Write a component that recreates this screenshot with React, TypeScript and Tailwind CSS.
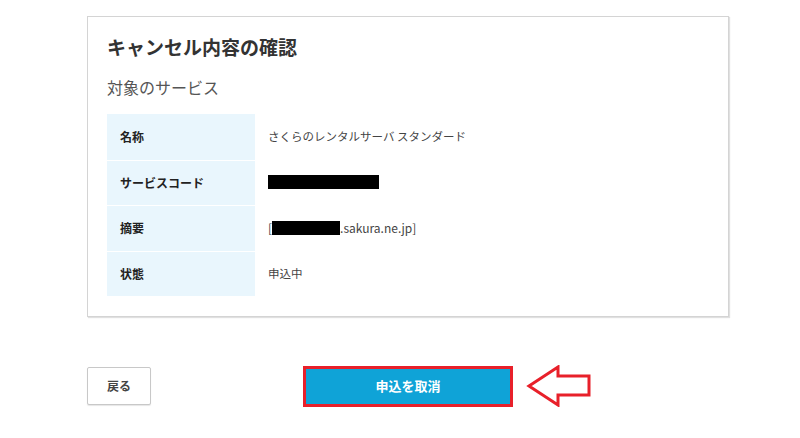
import React from 'react';

const rows: { label: string; value: React.ReactNode }[] = [
  { label: '名称', value: 'さくらのレンタルサーバ スタンダード' },
  { label: 'サービスコード', value: <span className="inline-block w-[111px] h-[14px] bg-black align-middle" /> },
  {
    label: '摘要',
    value: (
      <span className="inline-flex items-center text-[12px]">
        [<span className="inline-block w-[68px] h-[14px] bg-black" />.sakura.ne.jp]
      </span>
    ),
  },
  { label: '状態', value: '申込中' },
];

const App: React.FC = () => {
  return (
    <div className="w-[800px] h-[438px] bg-white pt-[16px] font-['Noto_Sans_CJK_JP',sans-serif] text-[#333]">
      <div className="ml-[87px] w-[642px] border border-[#d4d4d4] shadow-[1px_1px_1px_rgba(0,0,0,0.12)] px-[19px] pt-[16px] pb-[20px]">
        <h2 className="text-[19px] leading-[28px] font-bold text-[#333]">キャンセル内容の確認</h2>
        <h3 className="mt-[14px] text-[16px] leading-[24px] text-[#555]">対象のサービス</h3>
        <div className="mt-[15px]">
          {rows.map((r, i) => (
            <div key={r.label} className="flex h-[45.5px]">
              <div className={`w-[148px] bg-[#e9f6fd] pl-[13px] flex items-center text-[12px] font-bold text-[#222] ${i > 0 ? 'border-t border-white' : ''}`}>
                {r.label}
              </div>
              <div className="flex-1 pl-[13px] flex items-center text-[11.5px] text-[#444]">{r.value}</div>
            </div>
          ))}
        </div>
      </div>

      <div className="flex items-center mt-[48px]">
        <button className="ml-[87px] w-[64px] h-[38px] border border-[#c8c8c8] rounded-[2px] bg-white shadow-[0_1px_1px_rgba(0,0,0,0.1)] text-[12px] font-bold text-[#444]">
          戻る
        </button>
        <div className="ml-[152px] w-[210px] h-[41px] border-[3px] border-[#e8202a]">
          <button className="w-full h-full bg-[#0fa3d7] text-white text-[13px] font-bold">申込を取消</button>
        </div>
        <svg className="ml-[13px]" width="66" height="42" viewBox="0 0 66 42">
          <polygon
            points="3,21 32,2 32,11 63,11 63,30 32,30 32,40"
            fill="white"
            stroke="#e8202a"
            strokeWidth="3"
            strokeLinejoin="miter"
          />
        </svg>
      </div>
    </div>
  );
};

export default App;
